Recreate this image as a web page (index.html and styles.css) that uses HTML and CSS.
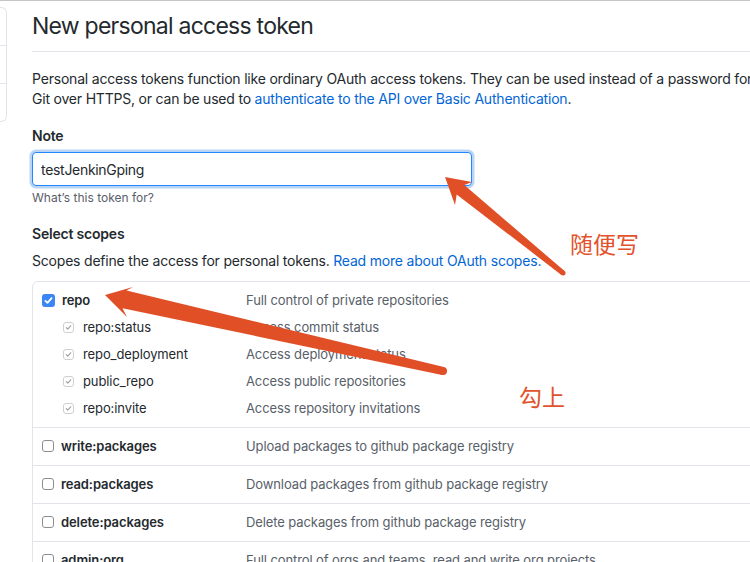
FILE: index.html
```html
<!DOCTYPE html>
<html lang="en">
<head>
<meta charset="utf-8">
<title>New personal access token</title>
<link rel="stylesheet" href="styles.css">
</head>
<body>
<div class="page">
  <aside class="sidebar">
    <div class="side-item"></div>
    <div class="side-item"></div>
    <div class="side-item"></div>
  </aside>
  <main class="main">
    <div class="subhead">
      <h2 class="subhead-heading">New personal access token</h2>
    </div>
    <p class="intro">Personal access tokens function like ordinary OAuth access tokens. They can be used instead of a password for<br>Git over HTTPS, or can be used to <a href="#">authenticate to the API over Basic Authentication</a>.</p>

    <dl class="form-group">
      <dt><label class="label" for="note">Note</label></dt>
      <dd>
        <input id="note" class="form-control" type="text" value="testJenkinGping">
        <p class="note">What’s this token for?</p>
      </dd>
    </dl>

    <dl class="form-group scopes-group">
      <dt class="label">Select scopes</dt>
      <dd>
        <p class="scopes-intro">Scopes define the access for personal tokens. <a href="#">Read more about OAuth scopes.</a></p>
        <div class="scopes">
          <div class="scope-group">
            <div class="scope-row">
              <span class="scope-label"><span class="cb cb-on"><svg viewBox="0 0 13 13"><path d="M3.4 6.8 L5.5 8.9 L9.6 4.1"/></svg></span><strong>repo</strong></span>
              <span class="scope-desc">Full control of private repositories</span>
            </div>
            <div class="scope-row sub">
              <span class="scope-label"><span class="cb cb-dis"><svg viewBox="0 0 11 11"><path d="M2.8 5.7 L4.6 7.5 L8.2 3.4"/></svg></span>repo:status</span>
              <span class="scope-desc">Access commit status</span>
            </div>
            <div class="scope-row sub">
              <span class="scope-label"><span class="cb cb-dis"><svg viewBox="0 0 11 11"><path d="M2.8 5.7 L4.6 7.5 L8.2 3.4"/></svg></span>repo_deployment</span>
              <span class="scope-desc">Access deployment status</span>
            </div>
            <div class="scope-row sub">
              <span class="scope-label"><span class="cb cb-dis"><svg viewBox="0 0 11 11"><path d="M2.8 5.7 L4.6 7.5 L8.2 3.4"/></svg></span>public_repo</span>
              <span class="scope-desc">Access public repositories</span>
            </div>
            <div class="scope-row sub">
              <span class="scope-label"><span class="cb cb-dis"><svg viewBox="0 0 11 11"><path d="M2.8 5.7 L4.6 7.5 L8.2 3.4"/></svg></span>repo:invite</span>
              <span class="scope-desc">Access repository invitations</span>
            </div>
          </div>
          <div class="scope-group">
            <div class="scope-row">
              <span class="scope-label"><span class="cb"></span><strong>write:packages</strong></span>
              <span class="scope-desc">Upload packages to github package registry</span>
            </div>
          </div>
          <div class="scope-group">
            <div class="scope-row">
              <span class="scope-label"><span class="cb"></span><strong>read:packages</strong></span>
              <span class="scope-desc">Download packages from github package registry</span>
            </div>
          </div>
          <div class="scope-group">
            <div class="scope-row">
              <span class="scope-label"><span class="cb"></span><strong>delete:packages</strong></span>
              <span class="scope-desc">Delete packages from github package registry</span>
            </div>
          </div>
          <div class="scope-group">
            <div class="scope-row">
              <span class="scope-label"><span class="cb"></span><strong>admin:org</strong></span>
              <span class="scope-desc">Full control of orgs and teams, read and write org projects</span>
            </div>
          </div>
        </div>
      </dd>
    </dl>
  </main>
</div>

<svg class="annotations" viewBox="0 0 750 562" aria-hidden="true">
  <polygon class="arrow" points="445,177 472,182 464.3,185 564.6,271.1 561.4,274.9 456.7,194.4 455,205"/>
  <circle class="arrow" cx="563" cy="273" r="2.5"/>
  <polygon class="arrow" points="105,295 133,287 126.5,290.6 443.9,367 442.1,375 122.5,308.2 127,317"/>
  <circle class="arrow" cx="443" cy="371" r="4"/>
</svg>
<span class="cn cn-1">随便写</span>
<span class="cn cn-2">勾上</span>
</body>
</html>
```
FILE: styles.css
```css
html, body {
  margin: 0;
  padding: 0;
  background: #fff;
}
body {
  border-top: 1px solid #c6c6c6;
  font-family: Inter, "Liberation Sans", sans-serif;
  font-size: 14px;
  line-height: 20px;
  letter-spacing: -0.2px;
  color: #24292e;
  overflow: hidden;
  width: 750px;
  height: 561px;
}
a {
  color: #0366d6;
  text-decoration: none;
}
.page {
  display: flex;
  align-items: flex-start;
}
.sidebar {
  flex: none;
  width: 7px;
  margin-top: 6px;
  border: 1px solid #e1e4e8;
  border-left: none;
  border-radius: 0 6px 6px 0;
  box-sizing: border-box;
}
.side-item {
  height: 37px;
}
.side-item + .side-item {
  border-top: 1px solid #e1e4e8;
}
.main {
  flex: none;
  width: 760px;
  margin-left: 25px;
}
.subhead {
  padding: 10px 0 10px;
  border-bottom: 1px solid #e1e4e8;
  margin-bottom: 17px;
}
.subhead-heading {
  margin: 0;
  font-size: 23px;
  line-height: 30px;
  font-weight: 400;
  letter-spacing: -0.75px;
}
.intro {
  margin: 0;
  white-space: nowrap;
}
.form-group {
  margin: 17px 0 0;
}
.form-group dt {
  margin: 0 0 6px;
}
.form-group dd {
  margin: 0;
}
.label {
  font-weight: 600;
  display: block;
}
.form-control {
  display: block;
  box-sizing: border-box;
  width: 440px;
  height: 34px;
  margin: 0;
  padding: 0 8px;
  font-family: Inter, "Liberation Sans", sans-serif;
  font-size: 14px;
  letter-spacing: -0.3px;
  color: #24292e;
  background: #fff;
  border: 1px solid #2188ff;
  border-radius: 4px;
  box-shadow: 0 0 0 2.5px rgba(3, 102, 214, 0.28);
  outline: none;
}
.note {
  margin: 3px 0 0;
  font-size: 12px;
  line-height: 18px;
  letter-spacing: 0;
  color: #586069;
}
.scopes-group dt {
  margin-bottom: 7px;
}
.scopes-intro {
  margin: 0 0 10px;
}
.scopes {
  border: 1px solid #e1e4e8;
  border-radius: 6px;
  font-size: 13px;
  letter-spacing: -0.1px;
}
.scope-group {
  padding: 8px 9px 9px;
}
.scope-group + .scope-group {
  border-top: 1px solid #e1e4e8;
}
.scope-row {
  display: flex;
  align-items: center;
  height: 20px;
}
.scope-row.sub {
  margin-top: 7px;
  padding-left: 21px;
}
.scope-label {
  flex: none;
  width: 204px;
  display: flex;
  align-items: center;
  gap: 7px;
}
.sub .scope-label {
  width: 183px;
  gap: 9px;
}
.scope-label strong {
  font-weight: 600;
}
.scope-desc {
  color: #586069;
  white-space: nowrap;
}
.cb {
  flex: none;
  box-sizing: border-box;
  width: 12px;
  height: 12px;
  border: 1px solid #8d8d8d;
  border-radius: 3px;
  background: #fff;
  display: flex;
}
.cb svg {
  width: 100%;
  height: 100%;
}
.cb path {
  fill: none;
  stroke-linecap: round;
  stroke-linejoin: round;
}
.cb-on {
  width: 13px;
  height: 13px;
  border: none;
  background: #3b85f5;
}
.cb-on path {
  stroke: #fff;
  stroke-width: 1.7;
}
.cb-dis {
  width: 11px;
  height: 11px;
  border: 1px solid #cfcfcf;
}
.cb-dis path {
  stroke: #a0a0a0;
  stroke-width: 1.4;
}
.annotations {
  position: absolute;
  left: 0;
  top: 0;
  width: 750px;
  height: 562px;
  pointer-events: none;
}
.arrow {
  fill: #e14f27;
}
.cn {
  position: absolute;
  font-family: "Noto Sans CJK SC", sans-serif;
  font-size: 23px;
  line-height: 23px;
  letter-spacing: 0;
  color: #e2532d;
  white-space: nowrap;
}
.cn-1 {
  left: 570px;
  top: 232px;
}
.cn-2 {
  left: 519px;
  top: 385px;
}
```
